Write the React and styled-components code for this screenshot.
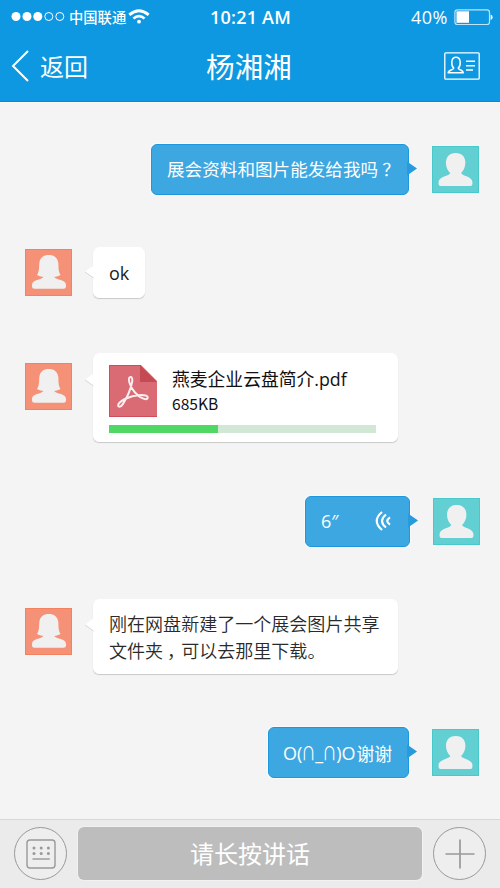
import React from 'react';
import styled, { createGlobalStyle } from 'styled-components';

const GlobalStyle = createGlobalStyle`
  * {
    box-sizing: border-box;
  }
  body {
    margin: 0;
    background: #f4f4f4;
    font-family: 'Open Sans', 'Noto Sans CJK SC', sans-serif;
  }
`;

const Page = styled.div`
  width: 500px;
  height: 888px;
  display: flex;
  flex-direction: column;
  overflow: hidden;
  background: #f4f4f4;
`;

const Header = styled.header`
  height: 102px;
  flex: none;
  background: #0d98e1;
  border-bottom: 1px solid #0a86d6;
  box-shadow: 0 1px 0 #fcfcfc;
  color: #fff;
`;

const StatusBar = styled.div`
  height: 34px;
  display: grid;
  grid-template-columns: 1fr auto 1fr;
  align-items: center;
  padding: 0 7px 0 11px;
`;

const StatusSide = styled.div`
  display: flex;
  align-items: center;
  justify-content: ${(props) => (props.$end ? 'flex-end' : 'flex-start')};
`;

const Carrier = styled.span`
  font-family: 'Noto Sans CJK SC', sans-serif;
  font-size: 14.3px;
  font-weight: 500;
  line-height: 20px;
  margin: 0 2px 0 4px;
`;

const Clock = styled.span`
  font-size: 18px;
  font-weight: 600;
  letter-spacing: 0.2px;
  line-height: 34px;
  padding-right: 3px;
`;

const Percent = styled.span`
  font-size: 18px;
  letter-spacing: 0.5px;
  line-height: 34px;
  margin-right: 6px;
`;

const NavBar = styled.div`
  height: 67px;
  display: grid;
  grid-template-columns: 1fr auto 1fr;
  align-items: center;
  padding: 0 20px 4px 11px;
`;

const BackButton = styled.button`
  display: flex;
  align-items: center;
  gap: 11px;
  padding: 0;
  border: 0;
  background: none;
  color: #fff;
  font: 24px/32px 'Noto Sans CJK SC', sans-serif;
`;

const Title = styled.h1`
  margin: 0;
  font: 28.6px/40px 'Noto Sans CJK SC', sans-serif;
  padding-left: 7px;
`;

const CardButton = styled.button`
  justify-self: end;
  display: flex;
  padding: 0;
  border: 0;
  background: none;
`;

const Chat = styled.main`
  flex: 1;
  padding: 42px 20px 0 25px;
`;

const Row = styled.div`
  display: flex;
  align-items: flex-start;
  flex-direction: ${(props) => (props.$mine ? 'row-reverse' : 'row')};
  gap: ${(props) => (props.$mine ? '23px' : '21px')};
  height: ${(props) => props.$height}px;
  margin-bottom: ${(props) => props.$gap || 0}px;
  margin-right: ${(props) => props.$inset || 0}px;
`;

const AvatarBox = styled.div`
  width: 47px;
  height: 47px;
  flex: none;
  margin-top: ${(props) => props.$top}px;
  background: ${(props) => (props.$mine ? '#62d0d2' : '#f59176')};
  border: 1px solid ${(props) => (props.$mine ? '#48c9cb' : '#f4825f')};

  svg {
    display: block;
    margin: -1px;
  }
`;

const Bubble = styled.div`
  position: relative;
  width: ${(props) => props.$width}px;
  height: 100%;
  padding: 0 15px;
  border-radius: 6px;
  display: flex;
  align-items: center;
  font-size: 18px;
  white-space: nowrap;
  color: ${(props) => (props.$mine ? '#fff' : '#1c1c1c')};
  background: ${(props) => (props.$mine ? '#3da7e1' : '#fff')};
  border: 1px solid ${(props) => (props.$mine ? '#1d97dd' : '#fff')};
  box-shadow: ${(props) =>
    props.$mine ? '0 0 0 1px #fafafa' : '0 1px 1px #c9c9c9'};
`;

const Tail = styled.svg`
  position: absolute;
  top: ${(props) => props.$top}px;
  ${(props) => (props.$mine ? 'right: -10px;' : 'left: -10px;')}
`;

const Question = styled.span`
  font: 17.6px/26px 'Noto Sans CJK SC', sans-serif;
  padding-bottom: 1px;
`;

// centres the punctuation in its square without widening the line
const Punctuation = styled.span`
  margin-left: 4px;
  letter-spacing: -4px;
`;

const Reply = styled.span`
  font-size: 18px;
`;

const Paragraph = styled.p`
  margin: 0;
  font: 350 18.05px/27px 'Noto Sans CJK SC', sans-serif;
  color: #2a2a2a;
`;

const Voice = styled.div`
  flex: 1;
  display: flex;
  align-items: center;
  justify-content: space-between;
  padding: 0 3px 1px 0;
`;

const Seconds = styled.span`
  font-size: 18px;
  font-weight: 500;
`;

const Face = styled.span`
  font-size: 18px;
  display: flex;
  align-items: center;
  line-height: 26px;
  margin-left: -1px;
`;

const Eye = styled.span`
  width: 13px;
  display: flex;
  justify-content: center;
  transform: scaleX(0.8);
`;

const Thanks = styled.span`
  font: 17.8px/26px 'Noto Sans CJK SC', sans-serif;
  margin-left: 1px;
`;

const FileCard = styled.div`
  width: 267px;
  height: 100%;
  padding-top: 11px;
`;

const FileInfo = styled.div`
  display: flex;
  gap: 15px;
  height: 52px;
`;

const FileName = styled.div`
  font: 17.8px/26px 'Open Sans', 'Noto Sans CJK SC', sans-serif;
  margin-top: 1px;
  color: #111;
`;

const FileSize = styled.div`
  font: 15.6px/22px 'Noto Sans CJK SC', sans-serif;
  color: #111;
`;

const Progress = styled.div`
  height: 8px;
  margin-top: 8px;
  background: #d0e8d5;
`;

const ProgressFill = styled.div`
  height: 100%;
  background: #4fd863;
`;

const Footer = styled.footer`
  height: 69px;
  flex: none;
  display: flex;
  align-items: flex-start;
  justify-content: space-between;
  padding: 7px 14px 0;
  background: #ebebeb;
  border-top: 1px solid #d7d7d7;
`;

const RoundButton = styled.button`
  width: 53px;
  height: 53px;
  padding: 0;
  border: 1px solid #999;
  border-radius: 50%;
  background: #eee;
  display: flex;
  align-items: center;
  justify-content: center;
`;

const TalkButton = styled.button`
  width: 344px;
  height: 53px;
  padding: 0 0 2px;
  border: 0;
  border-radius: 6px;
  background: #bdbdbd;
  box-shadow: 0 0 0 1px #f1f1f1;
  color: #fff;
  font: 24px/51px 'Noto Sans CJK SC', sans-serif;
`;

const Signal = () => (
  <svg width="54" height="12" viewBox="0 0 54 12" fill="#fff">
    <circle cx="5" cy="5.5" r="4.5" />
    <circle cx="16" cy="5.5" r="4.5" />
    <circle cx="26.8" cy="5.5" r="4.5" />
    <circle cx="37.8" cy="5.5" r="4" fill="none" stroke="#fff" />
    <circle cx="48.8" cy="5.5" r="4" fill="none" stroke="#fff" />
  </svg>
);

const Wifi = () => (
  <svg width="22" height="16" viewBox="0 0 22 16" fill="none" stroke="#fff">
    <path d="M1.3 5.8Q11 -2.4 20.7 5.8" strokeWidth="3" />
    <path d="M5.4 9.5Q11 4.7 16.6 9.5" strokeWidth="2.6" />
    <circle cx="11" cy="12.7" r="1.9" fill="#fff" stroke="none" />
  </svg>
);

const Battery = () => (
  <svg width="39" height="17" viewBox="0 0 39 17">
    <rect x="0.9" y="0.9" width="34.6" height="14.6" rx="2.5" fill="none" stroke="#bfe3f8" strokeWidth="1.2" />
    <rect x="2.5" y="2.3" width="12.5" height="11.5" fill="#fff" />
    <path d="M36.6 5.5Q38.6 6 38.6 8.2T36.6 11Z" fill="#fff" />
  </svg>
);

const BackArrow = () => (
  <svg width="18" height="32" viewBox="0 0 18 32" fill="none" stroke="#fff" strokeWidth="2">
    <path d="M17 1L2 16L17 31" />
  </svg>
);

const ContactCard = () => (
  <svg width="36" height="28" viewBox="0 0 36 28" fill="none" stroke="#fff" strokeWidth="1.3">
    <rect x="0.8" y="0.8" width="34.4" height="26.4" rx="1" />
    <path d="M9.8 16.2C6.8 13.5 6.8 5.3 12 5.3S17.2 13.5 14.2 16.2C14.3 17.8 19.2 17.8 19.2 20.8H4.2C4.2 17.8 9.7 17.8 9.8 16.2Z" strokeWidth="1.5" />
    <path d="M22 9.3H31M22 13.7H31M22 18.1H29" strokeWidth="1.5" />
  </svg>
);

const PdfIcon = () => (
  <svg width="48" height="52" viewBox="0 0 48 52">
    <path d="M0 0H32L48 16V52H0Z" fill="#da6a73" />
    <path d="M0.5 52V0.5H32M0 51.5H48" fill="none" stroke="#d14c58" />
    <path d="M31 0L48 17H31Z" fill="#c44b54" />
    <path
      d="M20.5 12.5C18.8 14.5 21.4 22.5 26 27.5C30.5 32.5 36.5 35.7 38.4 33.5C40.2 30.8 35 29.5 29 30.2C21.8 31 12.5 34.7 9.8 38.6C7.8 41.6 11.1 43.4 13.8 39.1C17.2 33.8 21.7 24 23.1 17.2C23.8 13.5 22.7 10.8 20.5 12.5Z"
      fill="none"
      stroke="#fbeeee"
      strokeWidth="2"
    />
  </svg>
);

const VoiceWaves = () => (
  <svg width="16" height="20" viewBox="0 0 16 20" fill="none" stroke="#fff" strokeWidth="2.2">
    <path d="M7 1Q-3.5 10 7 19" />
    <path d="M11 3.5Q3 10 11 16.5" />
    <path d="M15 6.3Q9.5 10 15 13.7" />
  </svg>
);

const KeyboardIcon = () => (
  <svg width="30" height="30" viewBox="0 0 30 30" fill="#999">
    <rect x="1" y="1" width="28" height="28" rx="3" fill="none" stroke="#999" strokeWidth="1.4" />
    {[9, 14.6].map((y) =>
      [8, 15.2, 22.4].map((x) => <circle key={`${x}-${y}`} cx={x} cy={y} r="1.5" />)
    )}
    <path d="M6.5 20H23.8" stroke="#999" strokeWidth="1.4" />
  </svg>
);

const PlusIcon = () => (
  <svg width="30" height="30" viewBox="0 0 30 30" stroke="#999" strokeWidth="1.7">
    <path d="M15 0.5V29.5M0.5 15H29.5" />
  </svg>
);

const malePath =
  'M18.3 27C12.5 22.5 11 7 23.7 7S34.9 22.5 29.1 27C30 30 40.4 30.5 40.4 36V38Q40.4 40 38.4 40H8.6Q6.6 40 6.6 38V36C6.6 30.5 17.4 30 18.3 27Z';
const femalePath =
  'M18.3 28Q14.5 27.6 12 26C14.8 22 13.8 17 14.4 13.5C15.2 8.5 18.5 6 23.8 6S32.4 8.5 33.2 13.5C33.8 17 32.8 22 35.6 26Q33.1 27.6 29.3 28C31 31.5 41 29.8 41 36V37.5Q41 39.8 38.5 39.8H9.5Q7 39.8 7 37.5V36C7 29.8 16.6 31.5 18.3 28Z';

const Avatar = ({ mine, top = 2 }) => (
  <AvatarBox $mine={mine} $top={top}>
    <svg width="47" height="47" viewBox="0 0 47 47">
      <path d={mine ? malePath : femalePath} fill="#f0f0f0" />
    </svg>
  </AvatarBox>
);

const Message = ({ mine, height, gap, inset, avatarTop, width, tailTop = 16, children }) => (
  <Row $mine={mine} $height={height} $gap={gap} $inset={inset}>
    <Avatar mine={mine} top={avatarTop} />
    <Bubble $mine={mine} $width={width}>
      {children}
      <Tail $mine={mine} $top={tailTop} width="11" height="15" viewBox="0 0 11 15">
        {mine ? (
          <path d="M0 0.5L10 7.5L0 14.5Z" fill="#279bdd" />
        ) : (
          <>
            <path d="M11 0.5L1 7.5L11 14.5Z" fill="#fff" />
            <path d="M1 8L9.5 14" stroke="#d9d9d9" fill="none" />
          </>
        )}
      </Tail>
    </Bubble>
  </Row>
);

export default function App() {
  return (
    <Page>
      <GlobalStyle />
      <Header>
        <StatusBar>
          <StatusSide>
            <Signal />
            <Carrier>中国联通</Carrier>
            <Wifi />
          </StatusSide>
          <Clock>10:21 AM</Clock>
          <StatusSide $end>
            <Percent>40%</Percent>
            <Battery />
          </StatusSide>
        </StatusBar>
        <NavBar>
          <BackButton>
            <BackArrow />
            返回
          </BackButton>
          <Title>杨湘湘</Title>
          <CardButton>
            <ContactCard />
          </CardButton>
        </NavBar>
      </Header>

      <Chat>
        <Message mine height={51} gap={52} inset={1} width={258}>
          <Question>
            展会资料和图片能发给我吗<Punctuation>？</Punctuation>
          </Question>
        </Message>
        <Message height={51} gap={55} width={52}>
          <Reply>ok</Reply>
        </Message>
        <Message height={89} gap={54} avatarTop={10} tailTop={18} width={305}>
          <FileCard>
            <FileInfo>
              <PdfIcon />
              <div>
                <FileName>燕麦企业云盘简介.pdf</FileName>
                <FileSize>685KB</FileSize>
              </div>
            </FileInfo>
            <Progress>
              <ProgressFill style={{ width: '41%' }} />
            </Progress>
          </FileCard>
        </Message>
        <Message mine height={51} gap={52} width={105}>
          <Voice>
            <Seconds>6″</Seconds>
            <VoiceWaves />
          </Voice>
        </Message>
        <Message height={75} gap={53} avatarTop={9} tailTop={17} width={305}>
          <Paragraph>
            刚在网盘新建了一个展会图片共享
            <br />
            文件夹<Punctuation>，</Punctuation>可以去那里下载。
          </Paragraph>
        </Message>
        <Message mine height={51} inset={1} width={141}>
          <Face>
            O(<Eye>∩</Eye>_<Eye>∩</Eye>)O<Thanks>谢谢</Thanks>
          </Face>
        </Message>
      </Chat>

      <Footer>
        <RoundButton>
          <KeyboardIcon />
        </RoundButton>
        <TalkButton>请长按讲话</TalkButton>
        <RoundButton>
          <PlusIcon />
        </RoundButton>
      </Footer>
    </Page>
  );
}
